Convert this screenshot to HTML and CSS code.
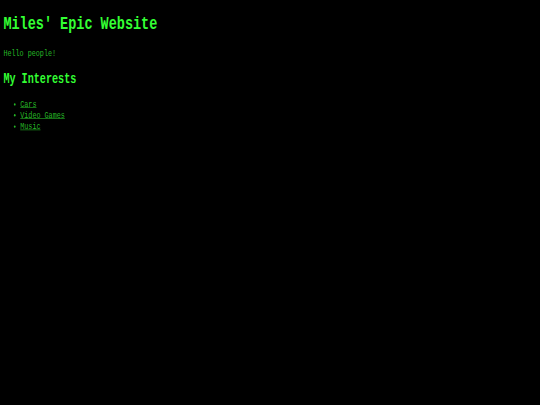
FILE: index.html
```html
<!DOCTYPE html>
<html>
<head>
<meta charset="utf-8">
<title>Miles' Epic Website</title>
<link rel="stylesheet" href="styles.css">
</head>
<body class="page">
<div class="screen">
<h1 class="title">Miles' Epic Website</h1>
<p class="intro">Hello people!</p>
<h2 class="subtitle">My Interests</h2>
<ul class="interests">
<li><a class="link" href="#">Cars</a></li>
<li><a class="link" href="#">Video Games</a></li>
<li><a class="link" href="#">Music</a></li>
</ul>
</div>
</body>
</html>
```
FILE: styles.css
```css
html { background: #000; }
.page {
  margin: 0;
  background: #000;
  overflow: hidden;
  width: 540px;
  height: 405px;
}
.screen {
  width: 1280px;
  height: 675px;
  padding: 0 8px;
  box-sizing: border-box;
  display: flow-root;
  transform: scale(0.421875, 0.6);
  transform-origin: 0 0;
  color: #26b826;
  font-family: "Liberation Mono", "Courier New", monospace;
  font-size: 16px;
}
.title { font-size: 2em; margin: 0.67em 0; color: #33ff33; }
.subtitle { font-size: 1.5em; margin: 0.83em 0; color: #33ff33; }
.intro { margin: 1em 0; }
.interests { margin: 1em 0; padding-left: 40px; line-height: 1.17; }
.link { color: #26b826; }
```
